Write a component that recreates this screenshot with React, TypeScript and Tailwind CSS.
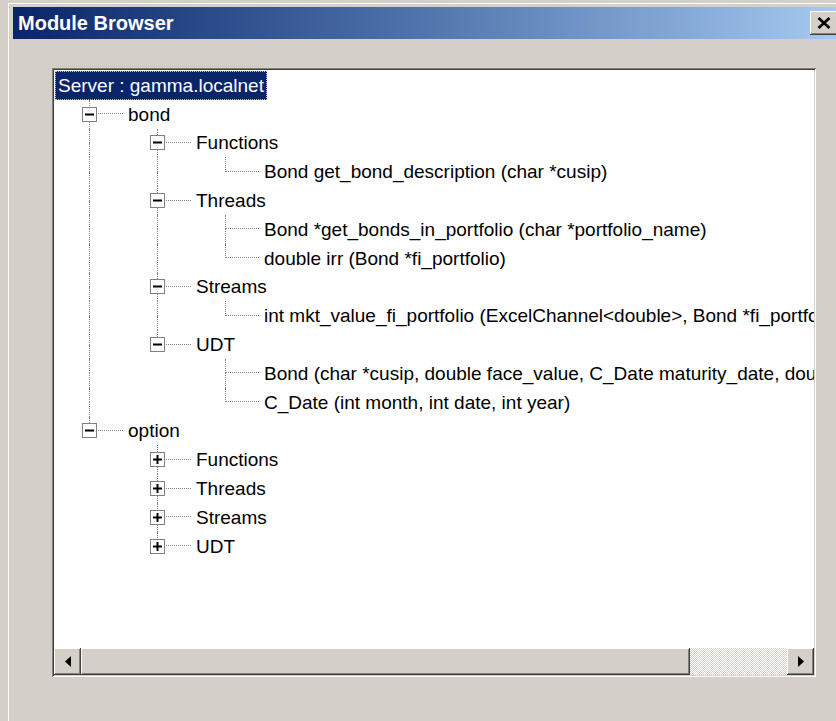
import clsx from 'clsx'

type Guide = 'pipe' | 'tee' | 'elbow' | 'blank'

type Row = {
  label: string
  guides: Guide[]
  box?: 'minus' | 'plus'
  selected?: boolean
}

const rows: Row[] = [
  { label: 'Server : gamma.localnet', guides: [], selected: true },
  { label: 'bond', guides: ['tee'], box: 'minus' },
  { label: 'Functions', guides: ['pipe', 'tee'], box: 'minus' },
  { label: 'Bond get_bond_description (char *cusip)', guides: ['pipe', 'pipe', 'elbow'] },
  { label: 'Threads', guides: ['pipe', 'tee'], box: 'minus' },
  { label: 'Bond *get_bonds_in_portfolio (char *portfolio_name)', guides: ['pipe', 'pipe', 'tee'] },
  { label: 'double irr (Bond *fi_portfolio)', guides: ['pipe', 'pipe', 'elbow'] },
  { label: 'Streams', guides: ['pipe', 'tee'], box: 'minus' },
  {
    label: 'int mkt_value_fi_portfolio (ExcelChannel<double>, Bond *fi_portfolio)',
    guides: ['pipe', 'pipe', 'elbow'],
  },
  { label: 'UDT', guides: ['pipe', 'elbow'], box: 'minus' },
  {
    label: 'Bond (char *cusip, double face_value, C_Date maturity_date, double coupon_rate)',
    guides: ['pipe', 'blank', 'tee'],
  },
  { label: 'C_Date (int month, int date, int year)', guides: ['pipe', 'blank', 'elbow'] },
  { label: 'option', guides: ['elbow'], box: 'minus' },
  { label: 'Functions', guides: ['blank', 'tee'], box: 'plus' },
  { label: 'Threads', guides: ['blank', 'tee'], box: 'plus' },
  { label: 'Streams', guides: ['blank', 'tee'], box: 'plus' },
  { label: 'UDT', guides: ['blank', 'elbow'], box: 'plus' },
]

const raised =
  'bg-[#d4d0c8] shadow-[inset_-1px_-1px_#404040,inset_1px_1px_#ffffff,inset_-2px_-2px_#808080,inset_2px_2px_#d4d0c8]'

function ExpandBox({ kind }: { kind: 'minus' | 'plus' }) {
  return (
    <svg width="15" height="15" viewBox="0 0 15 15" className="block">
      <rect x="0.5" y="0.5" width="14" height="14" fill="#fff" stroke="#808080" />
      <rect x="3" y="6.5" width="9" height="2" fill="#000" />
      {kind === 'plus' && <rect x="6.5" y="3" width="2" height="9" fill="#000" />}
    </svg>
  )
}

function GuideCell({ kind, box }: { kind: Guide; box?: 'minus' | 'plus' }) {
  const dot = 'border-dotted border-[#808080]'
  return (
    <div className="grid w-[68px] shrink-0 h-full">
      <div className="col-start-1 row-start-1 flex flex-col">
        <div
          className={clsx(
            'h-1/2 ml-[34px]',
            kind !== 'blank' && ['border-l', dot],
            (kind === 'tee' || kind === 'elbow') && ['border-b', dot]
          )}
        />
        <div className={clsx('h-1/2 ml-[34px]', (kind === 'pipe' || kind === 'tee') && ['border-l', dot])} />
      </div>
      {box && (
        <div className="col-start-1 row-start-1 self-center ml-[27px]">
          <ExpandBox kind={box} />
        </div>
      )}
    </div>
  )
}

function TreeRow({ row }: { row: Row }) {
  const last = row.guides.length - 1
  return (
    <div className="flex h-[28.8px] pl-[1px] items-stretch whitespace-nowrap">
      {row.guides.map((g, i) => (
        <GuideCell key={i} kind={g} box={i === last ? row.box : undefined} />
      ))}
      <span
        className={clsx(
          'flex items-center px-[2px] border',
          row.guides.length > 0 && 'ml-[2px]',
          row.selected
            ? 'bg-[#0a246a] text-white border-dotted border-[#d8c888]'
            : 'text-black border-transparent'
        )}
      >
        {row.label}
      </span>
    </div>
  )
}

function Arrow({ dir }: { dir: 'left' | 'right' }) {
  return (
    <svg width="6" height="11" viewBox="0 0 6 11">
      <path d={dir === 'left' ? 'M6 0 L0 5.5 L6 11 Z' : 'M0 0 L6 5.5 L0 11 Z'} fill="#000" />
    </svg>
  )
}

export default function App() {
  return (
    <div className="w-[836px] h-[721px] overflow-hidden bg-[#d4d0c8] pt-[3px] pl-[8px]">
      <div className="w-[836px] h-[730px] bg-[#d4d0c8] border-t border-l border-white flex flex-col">
        {/* caption */}
        <div className="mt-[3px] ml-[4px] mr-[4px] h-[32px] flex items-center justify-between pl-[5px] pr-[2px] bg-gradient-to-r from-[#0a246a] to-[#a6caf0]">
          <span className="text-white font-bold text-[20px] leading-none font-['Liberation_Sans',Arial,sans-serif]">
            Module Browser
          </span>
          <div className={clsx('w-[28px] h-[24px] flex items-center justify-center', raised)}>
            <svg width="14" height="12" viewBox="0 0 14 12">
              <path d="M1.5 1 L12.5 11 M12.5 1 L1.5 11" stroke="#000" strokeWidth="2.6" />
            </svg>
          </div>
        </div>

        {/* body */}
        <div className="pt-[29px] pl-[43px]">
          <div className="w-[764px] h-[609px] p-[2px] flex flex-col bg-white shadow-[inset_1px_1px_#808080,inset_-1px_-1px_#ffffff,inset_2px_2px_#404040,inset_-2px_-2px_#d4d0c8]">
            <div className="flex-1 overflow-hidden pt-[1px] text-[19px] leading-none font-['Liberation_Sans',Arial,sans-serif]">
              {rows.map((r, i) => (
                <TreeRow key={i} row={r} />
              ))}
            </div>

            {/* horizontal scrollbar */}
            <div className="h-[27px] flex shrink-0">
              <div className={clsx('w-[27px] flex items-center justify-center', raised)}>
                <Arrow dir="left" />
              </div>
              <div className={clsx('w-[609px]', raised)} />
              <div className="flex-1 bg-[repeating-conic-gradient(#d4d0c8_0_25%,#ffffff_0_50%)] bg-[length:2px_2px]" />
              <div className={clsx('w-[27px] flex items-center justify-center', raised)}>
                <Arrow dir="right" />
              </div>
            </div>
          </div>
        </div>
      </div>
    </div>
  )
}
